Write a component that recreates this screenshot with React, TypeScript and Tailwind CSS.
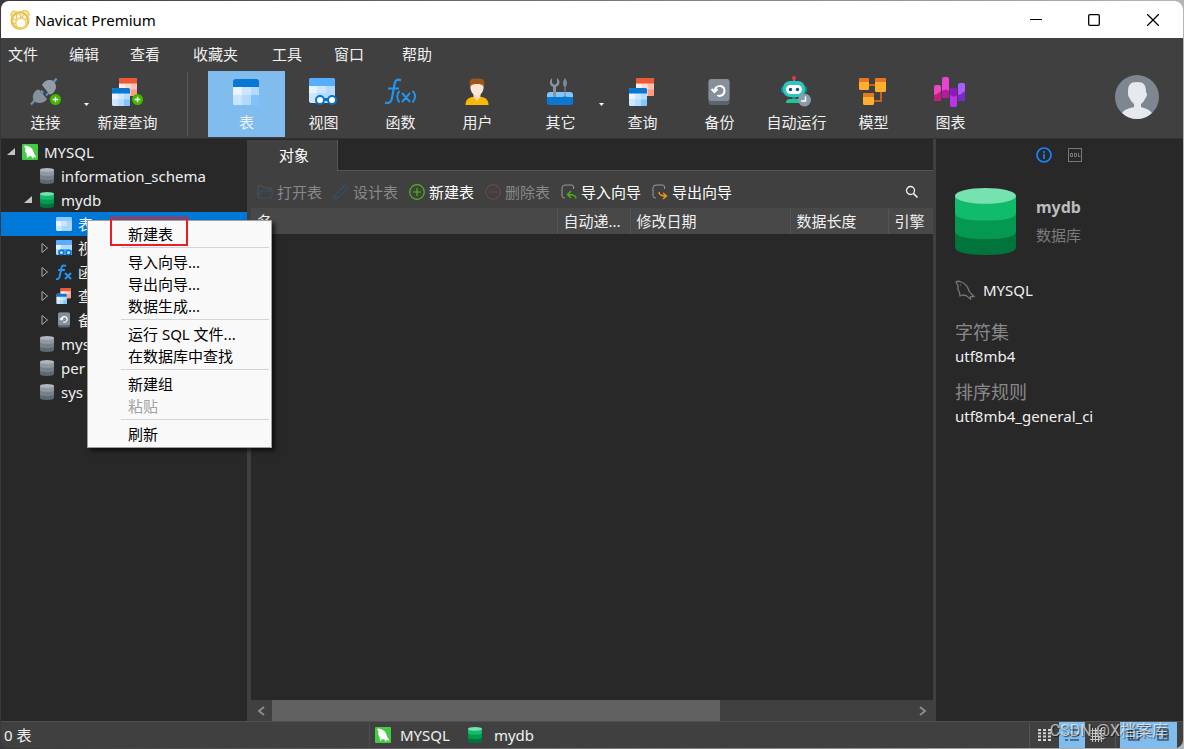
import type { ReactNode } from "react";

type IconProps = { className?: string };

const NavicatLogo = () => (
  <svg className="size-5" viewBox="0 0 20 20" fill="none">
    <circle cx="10" cy="10.500" r="8.300" stroke="#ecc04e" strokeWidth="2.400" />
    <path d="M1.500 6C.5 2 4 0 6.500 2.500M12 2c3-3 8 0 6.500 4" stroke="#f0cb62" strokeWidth="1.800" />
    <ellipse cx="11" cy="13" rx="5.300" ry="5" fill="#fff" stroke="#f3d272" strokeWidth="1.800" />
    <path d="M7 9C5.500 6.500 6.500 3.500 8.500 3.500S11.500 6 10.500 8M12 8c.5-3 3-4.500 4.300-3S16.500 9 15 10M6 10C4 8.500 2.500 9 2.500 11s1.500 3 3 2.500" stroke="#edc458" strokeWidth="1.300" />
  </svg>
);

const PlusBadge = () => (
  <g>
    <circle cx="26.500" cy="21.500" r="5.500" fill="#43b800" />
    <path d="M26.500 18.700v5.600M23.700 21.500h5.600" stroke="#fff" strokeWidth="1.300" />
  </g>
);

const PlugIcon = () => (
  <svg className="h-7 w-8" viewBox="0 0 32 28">
    <path d="M2 26.500l4-4.500M24 5l3.500-4.500" stroke="#5a96bd" strokeWidth="2.200" />
    <path d="M12 12.500l2.500 2.500M17 17.500l2.500-2.500" stroke="#5a96bd" strokeWidth="1.800" />
    <path d="M6 13.500q1.500-2 4-2L18 21c-2 3.500-8 5.500-11.500 3S3 17 6 13.500z" fill="#87919b" />
    <path d="M13 7c2-4.500 8-6.500 11.500-3.500S27.500 11 25 14q-2 2.500-4.500 2.500z" fill="#939da7" />
    <PlusBadge />
  </svg>
);

const GridSheet = ({ red = false }: { red?: boolean }) => (
  <g>
    <rect width="18" height="18" rx="1.500" fill={red ? "#ffc1b1" : "#b3dcff"} />
    <path d="M0 5.500h6v6H0z" fill={red ? "#ffece6" : "#e9f5ff"} />
    <path d="M6 5.500h6v6H6zM0 11.500h6V18H1.500L0 16.500z" fill={red ? "#ffd8cd" : "#cde7ff"} />
    <path d="M12 11.500h6v5L16.500 18H12z" fill={red ? "#ff9c82" : "#83c6ff"} />
    <path d="M0 5.500V1.500Q0 0 1.500 0h15Q18 0 18 1.500v4z" fill={red ? "#ec5935" : "#0878d4"} />
  </g>
);

const QueryIcon = ({ className = "size-7" }: IconProps) => (
  <svg className={className} viewBox="0 0 28 28">
    <g transform="translate(8 0)"><GridSheet red /></g>
    <g transform="translate(1 10)"><GridSheet /></g>
  </svg>
);

const NewQueryIcon = () => (
  <svg className="h-7 w-8" viewBox="0 0 32 28">
    <g transform="translate(8 0)"><GridSheet red /></g>
    <g transform="translate(1 10)"><GridSheet /></g>
    <PlusBadge />
  </svg>
);

const TableIcon = ({ className = "size-7" }: IconProps) => (
  <svg className={className} viewBox="0 0 28 28">
    <rect x="1" y="1" width="26" height="26" rx="2.500" fill="#b3d9ff" />
    <path d="M1 9h9v8H1z" fill="#e8f4ff" />
    <path d="M10 9h9v8h-9zM1 17h9v10H3q-2 0-2-2z" fill="#cce5ff" />
    <path d="M19 17h8v8q0 2-2 2h-6z" fill="#80c2ff" />
    <path d="M1 9V3.500Q1 1 3.500 1h21Q27 1 27 3.500V9z" fill="#0878d4" />
  </svg>
);

const SmallTableIcon = () => (
  <svg className="size-4" viewBox="0 0 16 16">
    <rect y="1" width="16" height="14" rx="1.500" fill="#a9d6ff" />
    <path d="M0 5h5.500v5H0z" fill="#e7f4ff" />
    <path d="M5.500 5h5v5h-5zM0 10h5.500v5H1.500L0 13.500z" fill="#cbe6ff" />
    <path d="M0 5V2.500Q0 1 1.500 1h13Q16 1 16 2.500V5z" fill="#8ccaff" />
  </svg>
);

const ViewIcon = ({ className = "size-7" }: IconProps) => (
  <svg className={className} viewBox="0 0 28 28">
    <rect width="26" height="25" rx="2.500" fill="#b3dbff" />
    <path d="M0 8h8v7H0z" fill="#e5f3ff" />
    <path d="M8 8h9v7H8zM0 15h8v10H2l-2-2z" fill="#cbe6ff" />
    <path d="M0 8V2.500Q0 0 2.500 0h21Q26 0 26 2.500V8z" fill="#58adff" />
    <path d="M12 21.500h11" stroke="#0673c7" strokeWidth="3" />
    <circle cx="11" cy="22" r="4" fill="#fff" stroke="#0673c7" strokeWidth="2" />
    <circle cx="23" cy="22" r="4" fill="#fff" stroke="#0673c7" strokeWidth="2" />
  </svg>
);

const SmallViewIcon = () => (
  <svg className="size-4" viewBox="0 0 16 16">
    <rect width="16" height="15" rx="1.500" fill="#b3dbff" />
    <path d="M0 5h5v4H0z" fill="#e5f3ff" />
    <path d="M0 5V1.500Q0 0 1.500 0h13Q16 0 16 1.500V5z" fill="#58adff" />
    <path d="M2 10q7-2 14 0v5H2z" fill="#4ea5f5" />
    <circle cx="5.500" cy="12.500" r="2.300" fill="#b9ddff" stroke="#0673c7" strokeWidth="1.400" />
    <circle cx="12.500" cy="12.500" r="2.300" fill="#b9ddff" stroke="#0673c7" strokeWidth="1.400" />
  </svg>
);

const FunctionIcon = () => (
  <svg className="h-7 w-8" viewBox="0 0 32 28" fill="none" stroke="#2095f2" strokeWidth="2.200">
    <path d="M17 2.500c-4-2-6 0-6.500 4L8 20c-.7 4-3 6-7 4.500M4 10.500h11" />
    <path d="M15.500 13c-3 3-3 8 0 11.500M28.500 13c4 3 3 8 0 11.500M18 15l8 9M26 15l-8 9" strokeWidth="1.900" />
  </svg>
);

const SmallFunctionIcon = () => (
  <svg className="size-4" viewBox="0 0 16 16" fill="none" stroke="#2095f2" strokeWidth="2">
    <path d="M10 2C7 .5 6 2 5.500 4L3.700 12C3 15 2 15.500 0 15M2 6h7M9 9l6 6M15 9l-6 6" />
  </svg>
);

const UserIcon = () => (
  <svg className="size-7" viewBox="0 0 28 28">
    <path d="M2.500 27c0-6 4-8 8-8h7c4 0 8 2 8 8z" fill="#fab807" />
    <path d="M10.500 15h7v4l-3.500 4-3.500-4z" fill="#ffd5b7" />
    <path d="M7.500 7c0-5 13-5 13 0 1 6-3 11-6.500 11S6.500 13 7.500 7z" fill="#ffe7d5" />
    <path d="M7 9C5 0 10 .5 14 .5S23 0 21 9c-2-3-4-3-7-3S9 6 7 9z" fill="#9d571d" />
  </svg>
);

const OtherIcon = () => (
  <svg className="size-7" viewBox="0 0 28 28">
    <rect x="1" y="14" width="26" height="9" rx="3" fill="#83c6ff" />
    <path d="M7 20V9C3 7 3 3 6 0v5l2.500 2L11 5V0c4 3 3 7-1 9v11z" fill="#87929c" />
    <path d="M17 20v-1.500l1.500-1V9C16.500 7 16.500 3 19 0c2.500 3 2.500 7 .5 9v8.500l1.500 1V20z" fill="#7c8994" />
    <path d="M1 19h26v5.500q0 2.500-2.500 2.500h-21Q1 27 1 24.500z" fill="#0878d4" />
  </svg>
);

const BackupIcon = ({ className = "size-7" }: IconProps) => (
  <svg className={className} viewBox="0 0 28 28">
    <rect x="3.500" y="1" width="21" height="26" rx="3" fill="#596570" />
    <rect x="3.500" y="1" width="21" height="22" rx="3" fill="#85909a" />
    <path d="M9.500 13.500c0-7 10-7 10-1s-6 6-7 4.500M6.500 11l3 3 3-3" fill="none" stroke="#fff" strokeWidth="2" />
  </svg>
);

const RobotIcon = () => (
  <svg className="h-8 w-8" viewBox="0 0 32 32">
    <path d="M14 2v4" stroke="#5fa9a5" strokeWidth="1.500" />
    <circle cx="14" cy="2" r="2" fill="#ed3542" />
    <rect x="1" y="10" width="26" height="7" rx="3" fill="#138ea0" />
    <rect x="3" y="5" width="22" height="16" rx="7" fill="#32c3bd" />
    <rect x="6" y="9" width="16" height="9" rx="4.500" fill="#fff" />
    <circle cx="10.500" cy="13.500" r="1.700" fill="#16478a" />
    <circle cx="17.500" cy="13.500" r="1.700" fill="#16478a" />
    <path d="M12 21h4v3h-4z" fill="#128b9c" />
    <path d="M6 27q0-4 4-4h10v4z" fill="#25c393" />
    <circle cx="24.500" cy="24" r="6.500" fill="#899aa8" />
    <path d="M25.500 20.500V25H21" fill="none" stroke="#fff" strokeWidth="1.500" />
  </svg>
);

const ModelIcon = () => (
  <svg className="size-7" viewBox="0 0 28 28">
    <path d="M10 7h8M22 13v10h-7" stroke="#c7631c" strokeWidth="2" fill="none" />
    <rect y="0" width="10" height="12" rx="1.500" fill="#ffae2e" />
    <rect x="16" y="0" width="11" height="14" rx="1.500" fill="#ffae2e" />
    <rect x="4" y="15" width="11" height="12" rx="1.500" fill="#ffae2e" />
    <path d="M0 4V1.500Q0 0 1.500 0h7Q10 0 10 1.500V4zM16 4V1.500Q16 0 17.500 0h8Q27 0 27 1.500V4zM4 19v-2.500Q4 15 5.500 15h8q1.500 0 1.500 1.500V19z" fill="#e67720" />
  </svg>
);

const ChartIcon = () => (
  <svg className="h-8 w-8" viewBox="0 0 32 32">
    <rect y="9" width="7" height="16" rx="2" fill="#ef46bb" />
    <path d="M0 19q4-1 7-4v8q0 2-2 2H2q-2 0-2-2z" fill="#c31c86" />
    <rect x="8" y="1" width="7" height="21" rx="2" fill="#e943d2" />
    <path d="M8 15q4-3 7 0v5q0 2-2 2h-3q-2 0-2-2z" fill="#b11c9b" />
    <rect x="16" y="12" width="7" height="19" rx="2" fill="#bd32ee" />
    <path d="M16 18v-4q0-2 2-2h3q2 0 2 2v5q-4 4-7-1z" fill="#8d18bd" />
    <rect x="24" y="7" width="7" height="18" rx="2" fill="#aa5cff" />
    <path d="M24 19q4-1 7-4v8q0 2-2 2h-3q-2 0-2-2z" fill="#7929c8" />
  </svg>
);

const Avatar = () => (
  <svg className="size-11" viewBox="0 0 44 44">
    <circle cx="22" cy="22" r="22" fill="#7e8690" />
    <path d="M13 17c0-7 2-10 9-10s9 3 9 10l1 2c0 3-2 4-3 7l-3 3v3c3 1 8 2 11 6a22 22 0 0 1-30 0c3-4 8-5 12-6v-3l-3-3c-1-3-3-4-3-7z" fill="#e6eaef" />
  </svg>
);

const MySqlIcon = () => (
  <svg className="size-4" viewBox="0 0 16 16">
    <rect width="16" height="16" rx="1" fill="#43cb45" />
    <path d="M2 2q1-.8 2.500-.2C8 2.500 10 4 11 6.500c1 2 1 3.500 2 4.500l1.500 2.500-3-.5-.5 2-2-3-2 .5L5 14l-.5-4.500L3 7l.5-2.500z" fill="#fff" />
  </svg>
);

const DolphinIcon = () => (
  <svg className="size-5" viewBox="0 0 20 20" fill="none" stroke="#777" strokeWidth="1.300">
    <path d="M1 2q2-1.500 5 0c4.500 1.500 6.500 4.500 7.500 7.500.6 2 1 3 2.500 4l3 3-3.500.3V19l-4.500-3.500-3-.5-3 1-.5-3.500L3 9.500V6z" />
    <path d="M5.500 4.500v1" />
  </svg>
);

const DatabaseIcon = ({ green = false, className = "size-4" }: IconProps & { green?: boolean }) => {
  const c = green ? ["#76e2af", "#10bb6c", "#05984f", "#00743b"] : ["#b2b6ba", "#929aa1", "#75808a", "#5c6872"];
  return (
    <svg className={className} viewBox="0 0 60 68" preserveAspectRatio="none">
      <path d="M0 40v20q0 8 30 8t30-8V40z" fill={c[3]} />
      <path d="M0 24v20q0 8 30 8t30-8V24z" fill={c[2]} />
      <path d="M0 8v17q0 8 30 8t30-8V8z" fill={c[1]} />
      <ellipse cx="30" cy="8" rx="30" ry="8" fill={c[0]} />
    </svg>
  );
};

const FolderIcon = () => (
  <svg className="size-4 shrink-0" viewBox="0 0 16 16" fill="none">
    <path d="M1 13V2h4l2 2h7v3" stroke="#555" />
    <path d="M1 14L4 7h12l-2 7z" stroke="#31536e" />
  </svg>
);

const PencilIcon = () => (
  <svg className="size-4 shrink-0" viewBox="0 0 16 16" fill="none" stroke="#31536e">
    <path d="M1 15l1-4L12 1l3 3L5 14zM10 3l3 3M2 11l3 3" />
  </svg>
);

const CircleIcon = ({ plus = false }: { plus?: boolean }) => (
  <svg className="size-4 shrink-0" viewBox="0 0 16 16" fill="none" stroke={plus ? "#49bd0d" : "#704541"} strokeWidth="1.200">
    <circle cx="8" cy="8" r="7.300" />
    <path d={plus ? "M4 8h8M8 4v8" : "M4 8h8"} />
  </svg>
);

const WizardIcon = ({ out = false }: { out?: boolean }) => (
  <svg className="size-4 shrink-0" viewBox="0 0 16 16" fill="none">
    <path d="M12.500 5V3q0-2-2-2H4Q1 1 1 4v8q0 2 3 2" stroke="#999" />
    {out
      ? <path d="M7 8q0 4 7 4M11 9l3.500 3-3.500 3" stroke="#f09711" strokeWidth="1.400" />
      : <path d="M15 14.500q0-4-8-4M10 7l-3.500 3.500L10 14" stroke="#42b610" strokeWidth="1.400" />}
  </svg>
);

const SearchIcon = () => (
  <svg className="size-3.5" viewBox="0 0 14 14" fill="none" stroke="#f0f0f0" strokeWidth="1.300">
    <circle cx="5.500" cy="5.500" r="4" /><path d="M8.500 8.500l4 4" strokeWidth="1.700" />
  </svg>
);

const InfoIcon = () => (
  <svg className="size-4" viewBox="0 0 16 16" fill="none" stroke="#1684ff" strokeWidth="1.700">
    <circle cx="8" cy="8" r="7" /><path d="M8 7v5M8 4v2" />
  </svg>
);

const DdlIcon = () => (
  <svg className="size-3.5" viewBox="0 0 14 14" fill="none" stroke="#777">
    <rect x=".5" y=".5" width="13" height="13" /><path d="M2.500 5.500h2v3h-2zM6.500 5.500h2v3h-2zM10.500 5v3.500h2" />
  </svg>
);

const Chevron = ({ right = false }: { right?: boolean }) => (
  <svg className="h-2.5 w-2" viewBox="0 0 8 10" fill="none" stroke="#8b8b8b" strokeWidth="2">
    <path d={right ? "M1 1l5 4-5 4" : "M6 1L1 5l5 4"} />
  </svg>
);

const ToolButton = ({ icon, label, active = false }: { icon: ReactNode; label: string; active?: boolean }) => (
  <button className={`flex h-[66px] w-[77px] shrink-0 flex-col items-center ${active ? "bg-[#80bdee]" : ""}`}>
    <span className="flex h-[41px] items-center justify-center pr-px">{icon}</span>
    <span className="leading-5 whitespace-nowrap">{label}</span>
  </button>
);

const DropArrow = ({ label }: { label: string }) => (
  <button aria-label={label} className="flex w-[5px] shrink-0 items-center">
    <svg className="h-[3px] w-[5px]" viewBox="0 0 5 3" fill="#fff"><path d="M0 0h5L2.500 3z" /></svg>
  </button>
);

const TreeRow = ({ indent, arrow, icon, label, selected = false }: { indent: string; arrow?: "open" | "closed"; icon: ReactNode; label: string; selected?: boolean }) => (
  <li className={`flex h-6 items-center gap-1.5 ${indent} ${selected ? "bg-[#0078d7]" : ""}`}>
    <span className="flex w-2.5 shrink-0 justify-center">
      {arrow && (
        <svg className="h-2.5 w-2" viewBox="0 0 8 10" fill={arrow === "open" ? "#c4c4c4" : "none"} stroke={arrow === "open" ? "none" : "#aaa"}>
          <path d={arrow === "open" ? "M8 1v7H0z" : "M1 .500L6.500 5 1 9.500z"} />
        </svg>
      )}
    </span>
    <span className="flex w-4 shrink-0 justify-center">{icon}</span>
    <span className="whitespace-nowrap">{label}</span>
  </li>
);

const ObjectAction = ({ icon, label, disabled = false }: { icon: ReactNode; label: string; disabled?: boolean }) => (
  <button disabled={disabled} className={`flex items-center gap-1 whitespace-nowrap ${disabled ? "text-[#888]" : "text-white"}`}>
    {icon}{label}
  </button>
);

const menuGroups = [
  ["新建表"],
  ["导入向导...", "导出向导...", "数据生成..."],
  ["运行 SQL 文件...", "在数据库中查找"],
  ["新建组", "粘贴"],
  ["刷新"],
];

const ContextMenu = () => (
  <div role="menu" className="absolute top-[220px] left-[87px] w-[185px] border border-[#a0a0a0] bg-[#f9f9f9] py-0.5 pr-0.5 text-black shadow-[3px_3px_4px_rgba(0,0,0,0.6)]">
    {menuGroups.map((group, i) => (
      <div key={group[0]} role="group">
        {i > 0 && <div role="separator" className="h-1.5 pt-0.5 pl-[33px]"><div className="h-px w-full bg-[#d4d4d4]" /></div>}
        {group.map((item) => (
          <button key={item} role="menuitem" disabled={item === "粘贴"} className="block h-[22px] w-full pl-10 text-left leading-[22px] whitespace-nowrap disabled:text-[#a2a2a2]">{item}</button>
        ))}
      </div>
    ))}
    <div className="pointer-events-none absolute -top-1 left-[22px] h-[29px] w-[78px] border-2 border-[#ec1c24]" />
  </div>
);

export default function App() {
  return (
    <div className="relative flex h-screen min-h-[480px] flex-col overflow-hidden bg-[linear-gradient(90deg,#39383b,#b5b5b5)] p-px font-['Noto_Sans','Noto_Sans_CJK_SC',sans-serif] text-[15px] leading-5 text-[#f0f0f0]">
      <div className="flex min-h-0 grow flex-col overflow-hidden rounded-lg bg-[#404040]">
        <header className="flex h-[37px] shrink-0 items-center bg-white pl-[9px] text-black">
          <NavicatLogo />
          <h1 className="grow pl-[5px]">Navicat Premium</h1>
          <button aria-label="最小化" className="flex w-[58px] justify-center"><svg className="size-3" viewBox="0 0 12 12" stroke="#000"><path d="M0 5.500h12" /></svg></button>
          <button aria-label="最大化" className="flex w-[58px] justify-center"><svg className="size-3" viewBox="0 0 12 12" fill="none" stroke="#000" strokeWidth="1.300"><rect x=".7" y=".7" width="10.600" height="10.600" rx="1" /></svg></button>
          <button aria-label="关闭" className="mr-px flex w-[59px] justify-center"><svg className="size-3" viewBox="0 0 12 12" stroke="#000" strokeWidth="1.300"><path d="M0 0l12 12M12 0L0 12" /></svg></button>
        </header>

        <div className="flex h-[101px] shrink-0 items-center border-b border-[#303030]">
          <div className="flex min-w-0 grow flex-col">
            <nav className="grid h-8 grid-cols-[61px_61px_63px_79px_62px_68px_auto] items-center justify-start pl-[7px]">
              {["文件", "编辑", "查看", "收藏夹", "工具", "窗口", "帮助"].map((m) => <button key={m} className="text-left">{m}</button>)}
            </nav>
            <div className="flex h-[68px] items-center pl-1.5" role="toolbar">
              <ToolButton icon={<PlugIcon />} label="连接" />
              <DropArrow label="连接类型" />
              <ToolButton icon={<NewQueryIcon />} label="新建查询" />
              <div className="mr-5 ml-[21px] h-16 w-px bg-[#555]" />
              <ToolButton icon={<TableIcon />} label="表" active />
              <ToolButton icon={<ViewIcon />} label="视图" />
              <ToolButton icon={<FunctionIcon />} label="函数" />
              <ToolButton icon={<UserIcon />} label="用户" />
              <div className="flex pl-1.5">
                <ToolButton icon={<OtherIcon />} label="其它" />
                <DropArrow label="其它对象" />
              </div>
              <ToolButton icon={<QueryIcon />} label="查询" />
              <ToolButton icon={<BackupIcon />} label="备份" />
              <ToolButton icon={<RobotIcon />} label="自动运行" />
              <ToolButton icon={<ModelIcon />} label="模型" />
              <ToolButton icon={<ChartIcon />} label="图表" />
            </div>
          </div>
          <button aria-label="账户" className="mt-[18px] mr-6 shrink-0"><Avatar /></button>
        </div>

        <main className="flex min-h-0 grow">
          <aside className="w-[246px] shrink-0 bg-[#282828] pt-px">
            <ul>
              <TreeRow indent="pl-[5px]" arrow="open" icon={<MySqlIcon />} label="MYSQL" />
              <TreeRow indent="pl-[22px]" icon={<DatabaseIcon className="h-4 w-3.5" />} label="information_schema" />
              <TreeRow indent="pl-[22px]" arrow="open" icon={<DatabaseIcon green className="h-4 w-3.5" />} label="mydb" />
              <TreeRow indent="pl-[39px]" icon={<SmallTableIcon />} label="表" selected />
              <TreeRow indent="pl-[39px]" arrow="closed" icon={<SmallViewIcon />} label="视图" />
              <TreeRow indent="pl-[39px]" arrow="closed" icon={<SmallFunctionIcon />} label="函数" />
              <TreeRow indent="pl-[39px]" arrow="closed" icon={<QueryIcon className="size-4" />} label="查询" />
              <TreeRow indent="pl-[39px]" arrow="closed" icon={<BackupIcon className="size-4" />} label="备份" />
              <TreeRow indent="pl-[22px]" icon={<DatabaseIcon className="h-4 w-3.5" />} label="mys" />
              <TreeRow indent="pl-[22px]" icon={<DatabaseIcon className="h-4 w-3.5" />} label="per" />
              <TreeRow indent="pl-[22px]" icon={<DatabaseIcon className="h-4 w-3.5" />} label="sys" />
            </ul>
          </aside>

          <section className="flex min-w-0 grow flex-col border-r-3 border-[#404040] bg-[#282828] pt-px">
            <div className="flex h-[31px] shrink-0" role="tablist">
              <button role="tab" aria-selected="true" className="w-[91px] border-r border-[#555] bg-[#404040] pb-0.5 pl-1 text-white">对象</button>
              <div className="grow border-b border-[#555]" />
            </div>
            <div className="flex h-[37px] shrink-0 items-center bg-[#404040] pt-1 pr-3.5 pl-2.5">
              <div className="flex grow gap-[11px]">
                <ObjectAction icon={<FolderIcon />} label="打开表" disabled />
                <ObjectAction icon={<PencilIcon />} label="设计表" disabled />
                <ObjectAction icon={<CircleIcon plus />} label="新建表" />
                <ObjectAction icon={<CircleIcon />} label="删除表" disabled />
                <ObjectAction icon={<WizardIcon />} label="导入向导" />
                <ObjectAction icon={<WizardIcon out />} label="导出向导" />
              </div>
              <button aria-label="搜索"><SearchIcon /></button>
            </div>
            <div className="flex min-h-0 grow flex-col border-l-4 border-[#404040]">
              <table className="w-full table-fixed">
                <thead>
                  <tr className="h-[26px] bg-[#484848] text-left">
                    <th className="border-r border-[#555] px-1.5 font-normal">名</th>
                    <th className="w-[73px] border-r border-[#555] px-1.5 font-normal whitespace-nowrap">自动递...</th>
                    <th className="w-40 border-r border-[#555] px-1.5 font-normal">修改日期</th>
                    <th className="w-[98px] border-r border-[#555] px-1.5 font-normal">数据长度</th>
                    <th className="w-[45px] pl-1.5 font-normal whitespace-nowrap">引擎</th>
                  </tr>
                </thead>
              </table>
              <div className="grow" />
              <div className="flex h-[21px] shrink-0 items-center bg-[#404040]">
                <button aria-label="向左滚动" className="flex w-[21px] justify-center"><Chevron /></button>
                <div className="h-full grow"><div className="h-full w-[70%] bg-[#616161]" /></div>
                <button aria-label="向右滚动" className="flex w-[21px] justify-center"><Chevron right /></button>
              </div>
            </div>
          </section>

          <aside className="flex w-[247px] shrink-0 flex-col bg-[#282828] pl-[19px]">
            <div className="flex items-center gap-4 pt-2 pl-[81px]">
              <button aria-label="常规"><InfoIcon /></button>
              <button aria-label="DDL"><DdlIcon /></button>
            </div>
            <div className="flex items-center gap-5 pt-[25px]">
              <DatabaseIcon green className="h-[67px] w-[61px]" />
              <div>
                <h2 className="text-base leading-6 font-bold text-[#bcbcbc]">mydb</h2>
                <p className="pt-1.5 pb-1 text-[#7b7b7b]">数据库</p>
              </div>
            </div>
            <div className="flex items-center gap-2 pt-[25px]">
              <DolphinIcon /><span>MYSQL</span>
            </div>
            <dl className="pt-5">
              <dt className="text-lg leading-6 text-[#888]">字符集</dt>
              <dd className="leading-6">utf8mb4</dd>
              <dt className="pt-3 text-lg leading-6 text-[#888]">排序规则</dt>
              <dd className="leading-6">utf8mb4_general_ci</dd>
            </dl>
          </aside>
        </main>

        <footer className="flex h-[27px] shrink-0 items-center border-t border-[#505050]">
          <span className="w-[368px] pl-[3px]">0 表</span>
          <div className="h-6 w-px bg-[#505050]" />
          <div className="flex grow items-center pl-[5px]">
            <MySqlIcon /><span className="pr-[18px] pl-[9px]">MYSQL</span>
            <DatabaseIcon green className="h-4 w-3.5" /><span className="pl-3">mydb</span>
          </div>
          <div className="h-6 w-px bg-[#555]" />
          <button aria-label="列表" className="flex h-full w-[29px] items-center justify-center">
            <svg className="h-3 w-3.5" viewBox="0 0 14 12" stroke="#d4d4d4" strokeWidth="2" strokeDasharray="3 2"><path d="M0 1h14M0 4.300h14M0 7.600h14M0 11h14" /></svg>
          </button>
          <button aria-label="详细信息" className="flex h-full w-[26px] items-center justify-center bg-[#80bdee]">
            <svg className="h-3 w-3.5" viewBox="0 0 14 12" stroke="#37536b" strokeWidth="1.500"><path d="M0 1h3M5 1h9M0 6h3M5 6h9M0 11h3M5 11h9" /></svg>
          </button>
          <button aria-label="ER 图表" className="flex h-full w-[30px] items-center pl-[5px]">
            <svg className="h-3.5 w-3.5" viewBox="0 0 14 14" stroke="#c9c9c9"><path d="M0 2.500h14M0 5.500h14M0 8.500h14M0 11.500h14M2.500 0v14M5.500 0v14M8.500 0v14M11.500 0v14" /></svg>
          </button>
          <div className="h-6 w-px bg-[#555]" />
          <div className="mr-1.5 ml-1 flex h-full w-[57px] items-center justify-around bg-[#80bdee]">
            <button aria-label="导航窗格"><svg className="size-3" viewBox="0 0 12 12" fill="none" stroke="#405668" strokeWidth="1.500"><path d="M1 1h10v10H1zM4 1v10" /></svg></button>
            <button aria-label="信息窗格"><svg className="size-3" viewBox="0 0 12 12" fill="none" stroke="#405668" strokeWidth="1.500"><path d="M1 1h10v10H1zM7 4h2v4H7z" /></svg></button>
          </div>
        </footer>
      </div>

      <ContextMenu />
      <div className="pointer-events-none absolute right-4 bottom-1.5 font-['Roboto','Noto_Sans_CJK_SC',sans-serif] text-base leading-6 text-white/65 [text-shadow:1px_1px_1px_rgba(0,0,0,0.6)]">CSDN @X档案库</div>
    </div>
  );
}
